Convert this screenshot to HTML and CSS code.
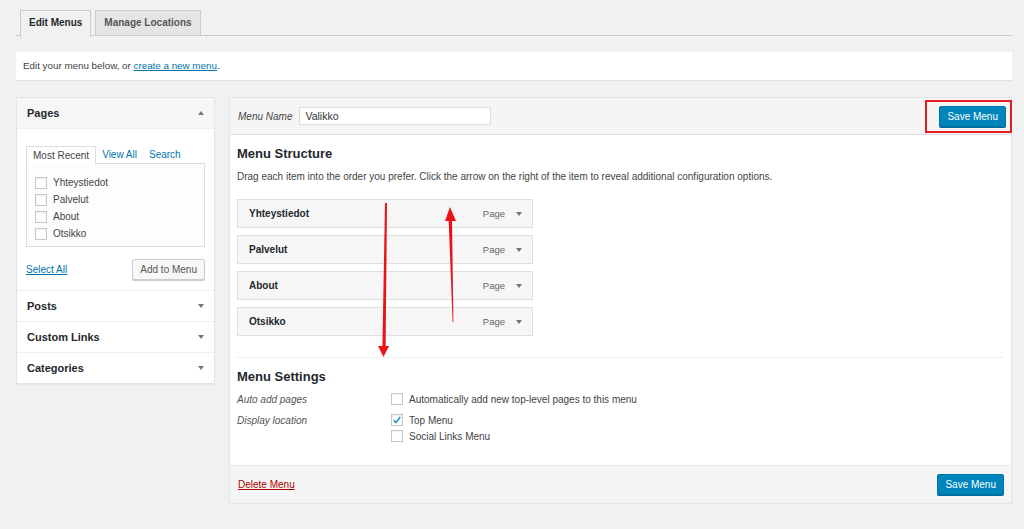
FILE: index.html
```html
<!DOCTYPE html>
<html lang="en">
<head>
<meta charset="UTF-8">
<title>Menus</title>
<link rel="stylesheet" href="styles.css">
</head>
<body>

<div class="nav-tabs">
  <span class="tab active">Edit Menus</span>
  <span class="tab">Manage Locations</span>
</div>

<div class="notice">Edit your menu below, or <a href="#">create a new menu</a>.</div>

<div class="columns">
  <div class="side">
    <div class="box">
      <div class="box-head open">Pages <span class="up"></span></div>
      <div class="box-body">
        <div class="mini-tabs">
          <span class="mini-tab active">Most Recent</span>
          <span class="mini-tab">View All</span>
          <span class="mini-tab">Search</span>
        </div>
        <div class="checklist">
          <label class="check"><span class="cb"></span>Yhteystiedot</label>
          <label class="check"><span class="cb"></span>Palvelut</label>
          <label class="check"><span class="cb"></span>About</label>
          <label class="check"><span class="cb"></span>Otsikko</label>
        </div>
        <div class="box-actions">
          <a href="#">Select All</a>
          <button class="btn">Add to Menu</button>
        </div>
      </div>
      <div class="box-head">Posts <span class="down"></span></div>
      <div class="box-head">Custom Links <span class="down"></span></div>
      <div class="box-head">Categories <span class="down"></span></div>
    </div>
  </div>

  <div class="main">
    <div class="main-head">
      <span class="field-label">Menu Name</span>
      <input class="name-input" value="Valikko">
      <div class="highlight"><button class="btn-primary">Save Menu</button></div>
    </div>
    <div class="main-body">
      <h3>Menu Structure</h3>
      <p class="hint">Drag each item into the order you prefer. Click the arrow on the right of the item to reveal additional configuration options.</p>
      <ul class="items">
        <li class="item"><b>Yhteystiedot</b><span class="type">Page</span><span class="down"></span></li>
        <li class="item"><b>Palvelut</b><span class="type">Page</span><span class="down"></span></li>
        <li class="item"><b>About</b><span class="type">Page</span><span class="down"></span></li>
        <li class="item"><b>Otsikko</b><span class="type">Page</span><span class="down"></span></li>
      </ul>
      <div class="settings">
        <h3>Menu Settings</h3>
        <div class="row">
          <span class="row-label">Auto add pages</span>
          <div class="row-opts">
            <label class="check"><span class="cb"></span>Automatically add new top-level pages to this menu</label>
          </div>
        </div>
        <div class="row">
          <span class="row-label">Display location</span>
          <div class="row-opts">
            <label class="check"><span class="cb checked"><svg viewBox="0 0 12 12" width="10" height="10"><path d="M2 6.5 L4.8 9 L10 2.5" fill="none" stroke="#1e8cbe" stroke-width="1.8"/></svg></span>Top Menu</label>
            <label class="check"><span class="cb"></span>Social Links Menu</label>
          </div>
        </div>
      </div>
    </div>
    <div class="main-foot">
      <a href="#" class="delete">Delete Menu</a>
      <button class="btn-primary">Save Menu</button>
    </div>
  </div>
</div>

<svg class="arrows" width="1024" height="529" viewBox="0 0 1024 529">
  <polygon points="385,203 387,203 385.6,347 382.4,347" fill="#e8141a"/>
  <polygon points="378,346 389,346 383.5,357" fill="#e8141a"/>
  <polygon points="452.6,322 453.4,322 452,219 448.6,219" fill="#e8141a"/>
  <polygon points="445,221 456,221 450,207" fill="#e8141a"/>
</svg>

</body>
</html>
```

FILE: styles.css
```css
body {
    margin: 0;
    padding: 10px 12px 20px 16px;
    background: #f1f1f1;
    font-family: "Liberation Sans", Arial, sans-serif;
    font-size: 10px;
    color: #444;
    position: relative;
}
a { color: #0073aa; }

.nav-tabs {
    border-bottom: 1px solid #ccc;
    padding-left: 4px;
    display: flex;
    gap: 4px;
    height: 25px;
}
.tab {
    display: inline-block;
    height: 24px;
    line-height: 24px;
    padding: 0 8px;
    border: 1px solid #ccc;
    border-bottom: none;
    background: #e5e5e5;
    color: #555;
    font-weight: bold;
    font-size: 10px;
}
.tab.active {
    background: #f1f1f1;
    color: #23282d;
    height: 26px;
}

.notice {
    margin-top: 16px;
    background: #fff;
    height: 28px;
    line-height: 28px;
    padding-left: 7px;
    font-size: 9.8px;
    box-shadow: 0 1px 1px rgba(0,0,0,0.06);
}

.columns {
    display: flex;
    gap: 14px;
    margin-top: 17px;
    align-items: flex-start;
}
.side { width: 199px; }
.box {
    background: #fff;
    border: 1px solid #e2e4e7;
    box-shadow: 0 1px 1px rgba(0,0,0,0.04);
}
.box-head {
    height: 30px;
    padding: 0 10px;
    display: flex;
    align-items: center;
    justify-content: space-between;
    font-size: 11px;
    font-weight: bold;
    color: #23282d;
    border-top: 1px solid #eee;
}
.box-head.open { background: #f6f6f6; border-top: none; border-bottom: 1px solid #eee; }
.up, .down {
    width: 0;
    height: 0;
    border-left: 3.5px solid transparent;
    border-right: 3.5px solid transparent;
}
.up { border-bottom: 4px solid #72777c; }
.down { border-top: 4px solid #72777c; }

.box-body { padding: 17px 9px 10px 9px; }
.mini-tabs { display: flex; height: 18px; }
.mini-tab {
    padding: 0 6px;
    line-height: 18px;
    color: #0073aa;
}
.mini-tab.active {
    color: #444;
    border: 1px solid #ddd;
    border-bottom: 1px solid #fff;
    background: #fff;
    position: relative;
    z-index: 1;
}
.checklist {
    border: 1px solid #ddd;
    background: #fdfdfd;
    margin-top: -1px;
    height: 84px;
    padding: 10px 8px 0;
    box-sizing: border-box;
}
.check {
    display: flex;
    align-items: center;
    height: 17px;
    color: #444;
}
.cb {
    width: 10px;
    height: 10px;
    border: 1px solid #c7c7c7;
    background: #fff;
    box-shadow: inset 0 1px 2px rgba(0,0,0,0.07);
    margin-right: 6px;
    display: inline-flex;
    align-items: center;
    justify-content: center;
}
.box-actions {
    display: flex;
    justify-content: space-between;
    align-items: center;
    margin-top: 12px;
}
.btn {
    height: 21px;
    padding: 0 7px;
    font: 10px "Liberation Sans", Arial, sans-serif;
    color: #555;
    background: #f7f7f7;
    border: 1px solid #ccc;
    border-radius: 2px;
    box-shadow: 0 1px 0 #ccc;
}

.main {
    flex: 1;
    background: #fff;
    border: 1px solid #e2e4e7;
}
.main-head {
    height: 36px;
    background: #f5f5f5;
    border-bottom: 1px solid #ddd;
    display: flex;
    align-items: center;
    padding-left: 8px;
}
.field-label { font-style: italic; color: #444; margin-right: 7px; }
.name-input {
    width: 192px;
    height: 18px;
    box-sizing: border-box;
    border: 1px solid #ddd;
    padding: 0 5px;
    font: 10.5px "Liberation Sans", Arial, sans-serif;
    color: #333;
}
.highlight {
    margin-left: auto;
    margin-right: -1px;
    border: 2.5px solid #e51c23;
    padding: 4px 4px 4px 12px;
    height: 21px;
}
.btn-primary {
    height: 21px;
    padding: 0 7px;
    background: #0085ba;
    border: 1px solid #0073aa;
    border-radius: 2px;
    color: #fff;
    font: 10px "Liberation Sans", Arial, sans-serif;
    box-shadow: 0 1px 0 #006799;
}

.main-body { padding: 11px 8px 0 7px; height: 330px; box-sizing: border-box; }
h3 {
    margin: 0;
    font-size: 13px;
    font-weight: bold;
    color: #23282d;
}
.hint { margin: 10px 0 0; color: #444; }
.items { list-style: none; margin: 17px 0 0; padding: 0; width: 296px; }
.item {
    height: 29px;
    box-sizing: border-box;
    border: 1px solid #dfdfdf;
    background: #f6f6f6;
    display: flex;
    align-items: center;
    padding: 0 10px 0 11px;
    margin-bottom: 7px;
}
.item b { color: #23282d; flex: 1; }
.item .type { color: #666; margin-right: 11px; font-size: 9.5px; }

.settings { border-top: 1px solid #eee; margin-top: 21px; padding-top: 11px; margin-right: -1px; }
.row { display: flex; margin-top: 7px; }
.row + .row { margin-top: 4px; }
.row-label { width: 154px; font-style: italic; color: #555; line-height: 17px; }
.row-opts .check { height: 16px; }

.main-foot {
    height: 37px;
    background: #f5f5f5;
    border-top: 1px solid #e5e5e5;
    display: flex;
    align-items: center;
    justify-content: space-between;
    padding: 0 7px 0 8px;
}
.delete { color: #a00; }

.arrows { position: absolute; left: 0; top: 0; pointer-events: none; }
```
